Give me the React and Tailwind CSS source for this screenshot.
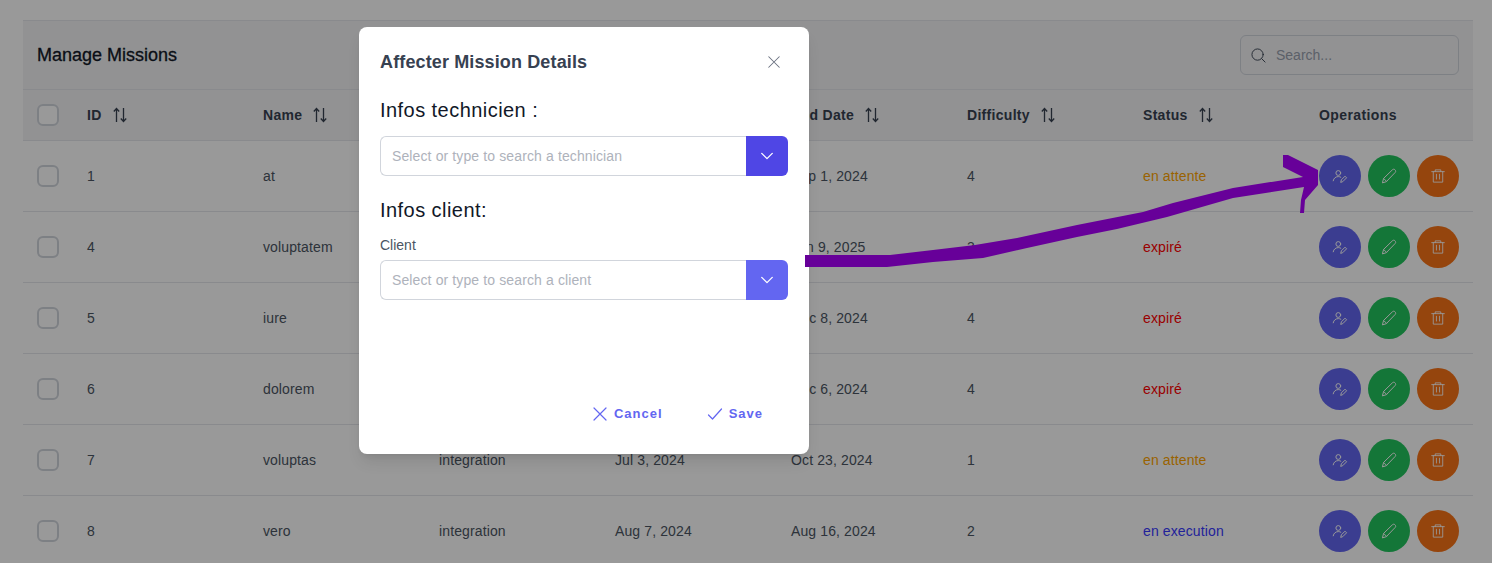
const columns = ['ID', 'Name', 'Type', 'Start Date', 'End Date', 'Difficulty', 'Status']

const missions = [
  { id: 1, name: 'at', type: 'integration', start: 'Jul 3, 2024', end: 'Sep 1, 2024', difficulty: 4, status: 'en attente' },
  { id: 4, name: 'voluptatem', type: 'integration', start: 'Mar 2, 2025', end: 'Jun 9, 2025', difficulty: 3, status: 'expiré' },
  { id: 5, name: 'iure', type: 'integration', start: 'Aug 1, 2024', end: 'Dec 8, 2024', difficulty: 4, status: 'expiré' },
  { id: 6, name: 'dolorem', type: 'integration', start: 'Sep 5, 2024', end: 'Dec 6, 2024', difficulty: 4, status: 'expiré' },
  { id: 7, name: 'voluptas', type: 'integration', start: 'Jul 3, 2024', end: 'Oct 23, 2024', difficulty: 1, status: 'en attente' },
  { id: 8, name: 'vero', type: 'integration', start: 'Aug 7, 2024', end: 'Aug 16, 2024', difficulty: 2, status: 'en execution' },
]

const statusColor = {
  'en attente': 'text-[#ffa500]',
  'expiré': 'text-[#ff0000]',
  'en execution': 'text-[#3a3aff]',
}

function Icon({ size = 16, children, className = '', stroke = 1 }) {
  return (
    <svg width={size} height={size} viewBox="0 0 16 16" fill="none" stroke="currentColor" strokeWidth={stroke} strokeLinecap="round" strokeLinejoin="round" className={`shrink-0 ${className}`}>
      {children}
    </svg>
  )
}

const CloseIcon = (props) => <Icon stroke={1.2} {...props}><path d="M2 2 L14 14 M14 2 L2 14" /></Icon>
const CheckIcon = (props) => <Icon stroke={1.2} {...props}><path d="M1.5 9 L5.5 13 L14.5 3" /></Icon>
const ChevronIcon = (props) => <Icon {...props}><path d="M2 5 L8 11 L14 5" strokeWidth="1.5" /></Icon>
const SearchIcon = (props) => <Icon {...props}><circle cx="7" cy="7" r="6" /><path d="M11.5 11.5 L15 15" /></Icon>
const UserEditIcon = (props) => (
  <Icon {...props}>
    <circle cx="6.3" cy="5" r="2.4" />
    <path d="M1.2 12.8 C1.6 10 4 8.6 6.3 8.6 C7.3 8.6 8 8.8 8.8 9.2" />
    <path d="M8.8 14 L9.4 11.8 L13 8.2 L14.6 9.8 L11 13.4 Z" />
  </Icon>
)
const PencilIcon = (props) => (
  <Icon {...props}>
    <path d="M1.5 14.5 L2.6 10.4 L11.4 1.8 C12.2 1 13.2 1 14 1.8 C14.9 2.7 14.9 3.7 14.1 4.5 L5.6 13.4 Z" />
    <path d="M2.8 10.6 L5.4 13.2" />
  </Icon>
)
const TrashIcon = (props) => (
  <Icon {...props}>
    <path d="M0.8 3 H15.2 M4.8 3 V1 H11.2 V3 M2.6 3 V15 H13.4 V3 M6.2 6 V11.5 M9.8 6 V11.5" />
  </Icon>
)

function Checkbox() {
  return <div className="w-[22px] h-[22px] rounded-md border-2 border-gray-300 bg-white shrink-0" />
}

function SortIcon() {
  return (
    <svg width="15" height="16" viewBox="0 0 15 16" fill="none" stroke="currentColor" strokeWidth="1.3" className="ml-[11px] text-[#374151] shrink-0">
      <path d="M3.5 15 V1.5 M0.8 4.5 L3.5 1.5 L6.2 4.5" />
      <path d="M10.5 1 V14.5 M7.8 11.5 L10.5 14.5 L13.2 11.5" />
    </svg>
  )
}

function RoundButton({ color, children }) {
  return (
    <button className={`w-[42px] h-[42px] rounded-full flex items-center justify-center text-white ${color}`}>
      {children}
    </button>
  )
}

function ComboBox({ placeholder, buttonColor }) {
  return (
    <div className="flex h-10 w-[408px]">
      <div className="flex-1 flex items-center pl-[11px] text-sm tracking-[0.12px] text-[#aeb2bb] border border-gray-300 border-r-0 rounded-l-md">
        {placeholder}
      </div>
      <div className={`w-[42px] flex items-center justify-center text-white rounded-r-md ${buttonColor}`}>
        <ChevronIcon size={14} />
      </div>
    </div>
  )
}

export default function App() {
  return (
    <div className="relative h-[563px] overflow-hidden bg-white font-['Liberation_Sans',Arial,sans-serif]">
      <div className="pt-5 px-[23px]">
        <div className="w-[1450px] border-t border-[#e5e7eb]">
          <div className="flex items-center justify-between h-[69px] bg-[#f3f4f6] pl-[14px] pr-[14px] border-b border-[#e5e7eb]">
            <h2 className="text-lg text-[#111827] [-webkit-text-stroke:0.3px]">Manage Missions</h2>
            <div className="flex items-center w-[219px] h-10 rounded-md border border-gray-300 pl-[10px]">
              <SearchIcon size={15} className="text-[#374151]" />
              <span className="ml-[10px] text-sm text-gray-400">Search...</span>
            </div>
          </div>

          <div className="flex items-center h-[51px] bg-[#f3f4f6] pl-[14px] border-b border-[#e5e7eb]">
            <div className="w-[50px] shrink-0"><Checkbox /></div>
            {columns.map((col) => (
              <div key={col} className="w-[176px] shrink-0 flex items-center text-sm font-bold text-[#374151] tracking-[0.3px]">
                {col}
                <SortIcon />
              </div>
            ))}
            <div className="flex-1 text-sm font-bold text-[#374151] tracking-[0.4px]">Operations</div>
          </div>

          {missions.map((m) => (
            <div key={m.id} className="flex items-center h-[71px] pl-[14px] border-b border-[#e5e7eb] text-sm tracking-[0.12px] text-[#4b5563]">
              <div className="w-[50px] shrink-0"><Checkbox /></div>
              <div className="w-[176px] shrink-0">{m.id}</div>
              <div className="w-[176px] shrink-0">{m.name}</div>
              <div className="w-[176px] shrink-0">{m.type}</div>
              <div className="w-[176px] shrink-0">{m.start}</div>
              <div className="w-[176px] shrink-0">{m.end}</div>
              <div className="w-[176px] shrink-0">{m.difficulty}</div>
              <div className={`w-[176px] shrink-0 ${statusColor[m.status]}`}>{m.status}</div>
              <div className="flex gap-[7px]">
                <RoundButton color="bg-[#6366f1]"><UserEditIcon /></RoundButton>
                <RoundButton color="bg-[#22c55e]"><PencilIcon /></RoundButton>
                <RoundButton color="bg-[#f97316]"><TrashIcon size={14} /></RoundButton>
              </div>
            </div>
          ))}
        </div>
      </div>

      {/* dim layer */}
      <div className="absolute inset-0 bg-black/40" />

      {/* modal */}
      <div className="absolute left-[359px] top-[27px] w-[450px] h-[427px] bg-white rounded-lg shadow-lg px-[21px] flex flex-col">
        <div className="flex items-center justify-between h-[69px] shrink-0">
          <h3 className="text-lg font-bold text-[#374151] tracking-[0.13px]">Affecter Mission Details</h3>
          <CloseIcon size={14} className="text-[#6b7280] mr-[7px]" />
        </div>
        <p className="text-xl text-[#111827] leading-7 tracking-[0.45px]">Infos technicien :</p>
        <div className="mt-3"><ComboBox placeholder="Select or type to search a technician" buttonColor="bg-[#4f46e5]" /></div>
        <p className="text-xl text-[#111827] leading-7 tracking-[0.45px] mt-5">Infos client:</p>
        <label className="text-sm text-[#4b5563] mt-[11px] leading-5">Client</label>
        <div className="mt-[5px]"><ComboBox placeholder="Select or type to search a client" buttonColor="bg-[#6366f1]" /></div>
        <div className="flex justify-end items-center mt-[104px] pr-[25px] text-[#6366f1] text-[13px] font-bold tracking-[1px]">
          <button className="flex items-center gap-[6px]"><CloseIcon />Cancel</button>
          <button className="flex items-center gap-[6px] ml-[44px]"><CheckIcon />Save</button>
        </div>
      </div>

      {/* hand drawn arrow annotation, sits on top of the modal edge */}
      <svg className="absolute left-[805px] top-[155px]" width="514" height="112" viewBox="805 155 514 112">
        <path
          fill="#670099"
          d="M805 255 L890 255 L933 250 L975 245 L1017 238 L1077 225 L1143 212 L1173 203 L1233 188 L1303 177 L1283 167 L1283 155 L1288 155 L1318 170 L1318 185 L1305 200 L1304 213 L1300 213 L1301 200 L1304 187 L1233 198 L1167 217 L1117 229 L1077 237 L1027 248 L983 258 L933 262 L887 267 L805 267 Z"
        />
      </svg>
    </div>
  )
}
